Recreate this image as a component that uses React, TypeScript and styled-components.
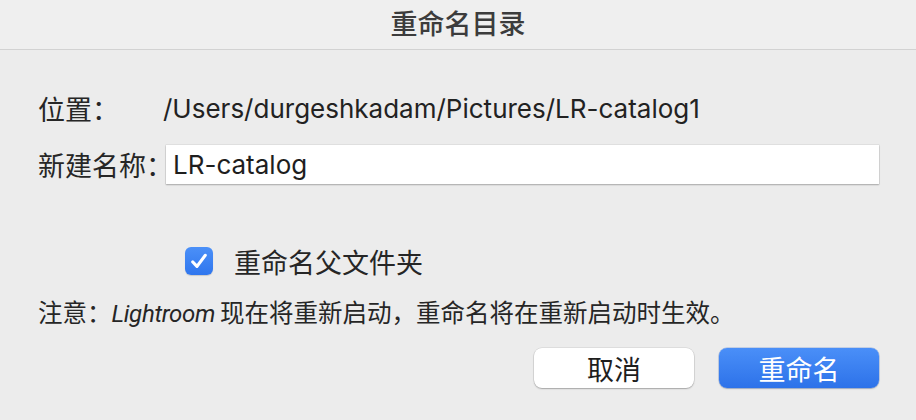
import React from 'react';
import styled, { createGlobalStyle } from 'styled-components';

const GlobalStyle = createGlobalStyle`
  html, body {
    margin: 0;
    padding: 0;
    background: #ececec;
  }
  body {
    font-family: Inter, "Noto Sans CJK SC", sans-serif;
    -webkit-font-smoothing: antialiased;
  }
`;

const App = () => {
  return (
    <Dialog>
      <GlobalStyle />
      <TitleBar>
        <Title>重命名目录</Title>
      </TitleBar>
      <Body>
        <FieldRow>
          <Label>位置：</Label>
          <PathText>/Users/durgeshkadam/Pictures/LR-catalog1</PathText>
        </FieldRow>
        <FieldRow $input>
          <Label>新建名称：</Label>
          <NameInput defaultValue="LR-catalog" />
        </FieldRow>
        <CheckRow>
          <CheckBox>
            <svg width="22" height="22" viewBox="0 0 22 22">
              <path
                d="M4.8 12 L9 16.4 L17.2 5.4"
                fill="none"
                stroke="#fff"
                strokeWidth="3.2"
                strokeLinecap="round"
                strokeLinejoin="round"
              />
            </svg>
          </CheckBox>
          <CheckLabel>重命名父文件夹</CheckLabel>
        </CheckRow>
        <Note>
          注意：<AppName>Lightroom</AppName> 现在将重新启动，重命名将在重新启动时生效。
        </Note>
        <ButtonRow>
          <Button>取消</Button>
          <Button $primary>重命名</Button>
        </ButtonRow>
      </Body>
    </Dialog>
  );
};

const Dialog = styled.div`
  width: 916px;
  height: 420px;
  background: #ececec;
  color: #262626;
  overflow: hidden;
`;

const TitleBar = styled.div`
  height: 49px;
  background: #efefef;
  border-bottom: 1px solid #d2d2d2;
  display: flex;
  align-items: center;
  justify-content: center;
`;

const Title = styled.div`
  font-size: 27px;
  font-weight: 500;
  color: #3c3c3c;
  margin-top: -4px;
`;

const Body = styled.div`
  padding: 0 37px 0 38px;
  display: flex;
  flex-direction: column;
`;

const FieldRow = styled.div<{ $input?: boolean }>`
  display: grid;
  grid-template-columns: 128px 1fr;
  align-items: center;
  height: ${({ $input }) => ($input ? '39px' : '40px')};
  margin-top: ${({ $input }) => ($input ? '17px' : '38px')};
`;

const Label = styled.span`
  font-size: 27px;
  white-space: nowrap;
`;

const PathText = styled.span`
  font-size: 26px;
  color: #222;
  margin-left: -3px;
  white-space: nowrap;
`;

const NameInput = styled.input`
  height: 39px;
  box-sizing: border-box;
  border: none;
  outline: none;
  background: #fff;
  padding: 0 7px;
  font-family: Inter, "Noto Sans CJK SC", sans-serif;
  font-size: 26px;
  color: #1e1e1e;
  box-shadow: 0 0 0 0.5px rgba(0, 0, 0, 0.1), 0 1px 1.5px rgba(0, 0, 0, 0.25);
`;

const CheckRow = styled.div`
  display: flex;
  align-items: center;
  gap: 21px;
  height: 30px;
  margin-top: 62px;
  padding-left: 147px;
`;

const CheckBox = styled.div`
  width: 28px;
  height: 28px;
  border-radius: 6px;
  background: linear-gradient(#4b90f8, #2f76ee);
  box-shadow: 0 1px 1px rgba(0, 0, 0, 0.15);
  display: flex;
  align-items: center;
  justify-content: center;
`;

const CheckLabel = styled.span`
  font-size: 27px;
`;

const Note = styled.div`
  font-size: 24.5px;
  height: 30px;
  line-height: 30px;
  margin-top: 22px;
  white-space: nowrap;
`;

const AppName = styled.em`
  font-family: Roboto, "Noto Sans CJK SC", sans-serif;
  font-size: 24px;
  font-style: italic;
  letter-spacing: -0.3px;
  margin-right: -2px;
`;

const ButtonRow = styled.div`
  display: flex;
  justify-content: flex-end;
  gap: 25px;
  margin-top: 20px;
`;

const Button = styled.button<{ $primary?: boolean }>`
  width: 160px;
  height: 40px;
  border-radius: 8px;
  border: none;
  font-family: Inter, "Noto Sans CJK SC", sans-serif;
  font-size: 27px;
  display: flex;
  align-items: center;
  justify-content: center;
  padding: 0;
  color: ${({ $primary }) => ($primary ? '#fff' : '#1e1e1e')};
  background: ${({ $primary }) =>
    $primary ? 'linear-gradient(#4a8ff8, #2d72e9)' : '#fff'};
  box-shadow: ${({ $primary }) =>
    $primary
      ? '0 0 0 0.5px rgba(30, 90, 200, 0.4), 0 1px 1.5px rgba(0, 0, 0, 0.2)'
      : '0 0 0 0.5px rgba(0, 0, 0, 0.12), 0 1px 1.5px rgba(0, 0, 0, 0.25)'};
`;

export default App;
